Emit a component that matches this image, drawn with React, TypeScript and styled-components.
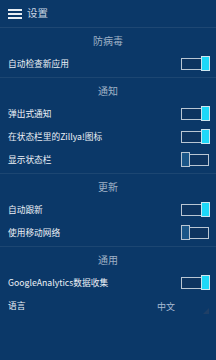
import React from "react";
import styled, { createGlobalStyle } from "styled-components";

const Global = createGlobalStyle`
  html, body { margin: 0; padding: 0; background: #0b3868; }
  body { font-family: "Noto Sans CJK SC", "Noto Sans", Roboto, sans-serif; }
  * { box-sizing: border-box; }
`;

const Page = styled.div`
  width: 216px;
  height: 360px;
  background: #0b3868;
  display: flex;
  flex-direction: column;
  overflow: hidden;
`;

const Header = styled.div`
  height: 28px;
  display: flex;
  align-items: center;
  gap: 5px;
  padding-left: 8px;
  border-bottom: 1px solid rgba(255, 255, 255, 0.08);
`;

const Burger = styled.div`
  width: 14px;
  height: 10px;
  display: flex;
  flex-direction: column;
  justify-content: space-between;
  span {
    display: block;
    height: 2px;
    background: #e9eef4;
  }
`;

const Title = styled.div`
  color: #c9d5e3;
  font-size: 10.5px;
  line-height: 1;
`;

const Section = styled.div<{ $last?: boolean }>`
  padding-bottom: ${(p) => (p.$last ? 0 : 2)}px;
  border-bottom: ${(p) => (p.$last ? "none" : "1px solid rgba(255,255,255,0.07)")};
`;

const SectionTitle = styled.div`
  height: 24px;
  display: flex;
  align-items: center;
  justify-content: center;
  color: #9fb1c6;
  font-size: 10px;
`;

const Row = styled.div`
  height: 23px;
  display: flex;
  align-items: center;
  justify-content: space-between;
  padding: 0 7px 0 8px;
`;

const Label = styled.div`
  color: #eef2f7;
  font-size: 8.7px;
  white-space: nowrap;
`;

const Track = styled.div<{ $on: boolean }>`
  position: relative;
  width: 28px;
  height: 12px;
  border: 1.5px solid #b9c6d3;
  background: #0d3460;
`;

const Knob = styled.div<{ $on: boolean }>`
  position: absolute;
  top: -2.5px;
  ${(p) => (p.$on ? "right: -1.5px;" : "left: -1.5px;")}
  width: 9px;
  height: 15px;
  border: 1.5px solid ${(p) => (p.$on ? "#cde6ef" : "#b9c6d3")};
  background: ${(p) => (p.$on ? "#1ed8f8" : "#1b5688")};
`;

const Value = styled.div`
  width: 52px;
  display: flex;
  align-items: center;
  justify-content: space-between;
  color: #a9bcd3;
  font-size: 9px;
  padding-top: 2px;
`;

const Switch = ({ on }: { on: boolean }) => (
  <Track $on={on}>
    <Knob $on={on} />
  </Track>
);

type Item = { label: string; on: boolean };

const sections: { title: string; items: Item[] }[] = [
  { title: "防病毒", items: [{ label: "自动检查新应用", on: true }] },
  {
    title: "通知",
    items: [
      { label: "弹出式通知", on: true },
      { label: "在状态栏里的Zillya!图标", on: true },
      { label: "显示状态栏", on: false },
    ],
  },
  {
    title: "更新",
    items: [
      { label: "自动跟新", on: true },
      { label: "使用移动网络", on: false },
    ],
  },
];

export default function App() {
  return (
    <Page>
      <Global />
      <Header>
        <Burger>
          <span />
          <span />
          <span />
        </Burger>
        <Title>设置</Title>
      </Header>
      {sections.map((s) => (
        <Section key={s.title}>
          <SectionTitle>{s.title}</SectionTitle>
          {s.items.map((it) => (
            <Row key={it.label}>
              <Label>{it.label}</Label>
              <Switch on={it.on} />
            </Row>
          ))}
        </Section>
      ))}
      <Section $last>
        <SectionTitle>通用</SectionTitle>
        <Row>
          <Label>GoogleAnalytics数据收集</Label>
          <Switch on />
        </Row>
        <Row>
          <Label>语言</Label>
          <Value>
            <span>中文</span>
            <svg width="6" height="6" viewBox="0 0 6 6" style={{ marginTop: 8 }}>
              <polygon points="6,0 6,6 0,6" fill="#1f3f66" />
            </svg>
          </Value>
        </Row>
      </Section>
    </Page>
  );
}
